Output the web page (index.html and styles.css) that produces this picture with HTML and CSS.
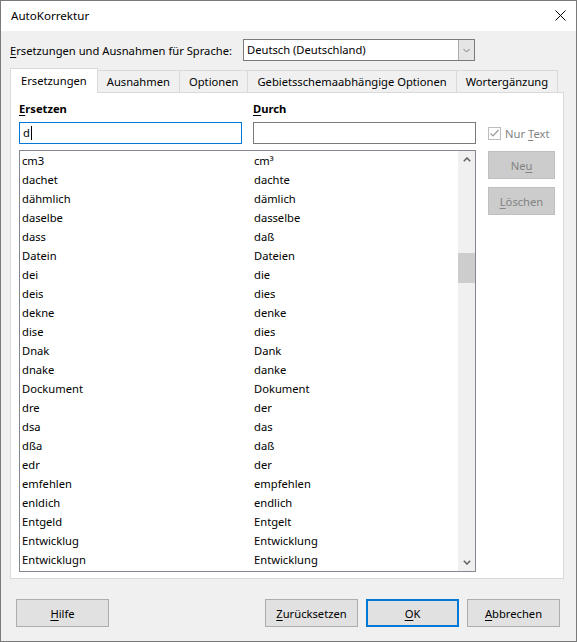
FILE: index.html
```html
<!DOCTYPE html>
<html lang="de">
<head>
    <meta charset="UTF-8">
    <title>AutoKorrektur</title>
    <link rel="stylesheet" href="styles.css">
</head>
<body>
    <div class="window">
        <!-- Titelleiste -->
        <div class="titlebar">
            <span class="title">AutoKorrektur</span>
            <svg class="close" width="11" height="11" viewBox="0 0 11 11">
                <path d="M0.5 0.5 L10.5 10.5 M10.5 0.5 L0.5 10.5" stroke="#000" stroke-width="1" fill="none"/>
            </svg>
        </div>

        <div class="content">
            <div class="lang-row">
                <span class="lang-label"><u>E</u>rsetzungen und Ausnahmen für Sprache:</span>
                <div class="combo">
                    <span class="combo-text">Deutsch (Deutschland)</span>
                    <span class="combo-btn">
                        <svg width="7" height="5" viewBox="0 0 7 5"><polyline points="0.5,1 3.5,4 6.5,1" fill="none" stroke="#7a7a7a" stroke-width="1"/></svg>
                    </span>
                </div>
            </div>

            <div class="tabs">
                <div class="tab active">Ersetzungen</div>
                <div class="tab">Ausnahmen</div>
                <div class="tab">Optionen</div>
                <div class="tab">Gebietsschemaabhängige Optionen</div>
                <div class="tab">Wortergänzung</div>
            </div>

            <div class="panel">
                <div class="left-col">
                    <div class="fields">
                        <label class="field-label"><u>E</u>rsetzen</label>
                        <label class="field-label"><u>D</u>urch</label>
                        <div class="input focused">d<span class="caret"></span></div>
                        <div class="input"></div>
                    </div>

                    <div class="listbox">
                        <div class="rows">
                            <div class="row"><span>cm3</span><span>cm³</span></div>
                            <div class="row"><span>dachet</span><span>dachte</span></div>
                            <div class="row"><span>dähmlich</span><span>dämlich</span></div>
                            <div class="row"><span>daselbe</span><span>dasselbe</span></div>
                            <div class="row"><span>dass</span><span>daß</span></div>
                            <div class="row"><span>Datein</span><span>Dateien</span></div>
                            <div class="row"><span>dei</span><span>die</span></div>
                            <div class="row"><span>deis</span><span>dies</span></div>
                            <div class="row"><span>dekne</span><span>denke</span></div>
                            <div class="row"><span>dise</span><span>dies</span></div>
                            <div class="row"><span>Dnak</span><span>Dank</span></div>
                            <div class="row"><span>dnake</span><span>danke</span></div>
                            <div class="row"><span>Dockument</span><span>Dokument</span></div>
                            <div class="row"><span>dre</span><span>der</span></div>
                            <div class="row"><span>dsa</span><span>das</span></div>
                            <div class="row"><span>dßa</span><span>daß</span></div>
                            <div class="row"><span>edr</span><span>der</span></div>
                            <div class="row"><span>emfehlen</span><span>empfehlen</span></div>
                            <div class="row"><span>enldich</span><span>endlich</span></div>
                            <div class="row"><span>Entgeld</span><span>Entgelt</span></div>
                            <div class="row"><span>Entwicklug</span><span>Entwicklung</span></div>
                            <div class="row"><span>Entwicklugn</span><span>Entwicklung</span></div>
                        </div>
                        <div class="scrollbar">
                            <div class="arrow">
                                <svg width="8" height="5" viewBox="0 0 8 5"><polyline points="0.8,4.2 4,1 7.2,4.2" fill="none" stroke="#606060" stroke-width="1.5"/></svg>
                            </div>
                            <div class="track"><div class="thumb"></div></div>
                            <div class="arrow">
                                <svg width="8" height="5" viewBox="0 0 8 5"><polyline points="0.8,0.8 4,4 7.2,0.8" fill="none" stroke="#606060" stroke-width="1.5"/></svg>
                            </div>
                        </div>
                    </div>
                </div>

                <div class="right-col">
                    <div class="check-row">
                        <span class="checkbox">
                            <svg width="11" height="11" viewBox="0 0 11 11"><polyline points="1.5,5.5 4,8 9.5,2" fill="none" stroke="#9a9a9a" stroke-width="1.2"/></svg>
                        </span>
                        <span class="disabled">Nur <u>T</u>ext</span>
                    </div>
                    <div class="button disabled-btn">Ne<u>u</u></div>
                    <div class="button disabled-btn"><u>L</u>öschen</div>
                </div>
            </div>
        </div>

        <div class="footer">
            <div class="button help"><u>H</u>ilfe</div>
            <div class="button"><u>Z</u>urücksetzen</div>
            <div class="button default"><u>O</u>K</div>
            <div class="button"><u>A</u>bbrechen</div>
        </div>
    </div>
</body>
</html>
```

FILE: styles.css
```css
body {
    margin: 0;
    font-family: "Noto Sans", "Open Sans", sans-serif;
    font-size: 11.2px;
    color: #000;
    background: #fff;
}
u {
    text-decoration-thickness: 1px;
    text-underline-offset: 2px;
}
.window {
    width: 577px;
    height: 642px;
    box-sizing: border-box;
    border: 1px solid #7a7a7a;
    background-color: #f0f0f0;
    display: flex;
    flex-direction: column;
}
/* Titelleiste */
.titlebar {
    height: 30px;
    background-color: #fff;
    display: flex;
    align-items: center;
    justify-content: space-between;
    padding: 0 10px 2px 10px;
    box-sizing: border-box;
}
.title {
    font-size: 11.6px;
}
.content {
    padding: 8px 12px 0 9px;
}
.lang-row {
    display: flex;
    align-items: center;
    height: 22px;
}
.lang-label {
    width: 233px;
}
.combo {
    width: 232px;
    height: 22px;
    box-sizing: border-box;
    border: 1px solid #7a7a7a;
    background-color: #fff;
    display: flex;
}
.combo-text {
    flex: 1;
    padding-left: 3px;
    line-height: 20px;
}
.combo-btn {
    width: 15px;
    background-color: #e5e5e5;
    border-left: 1px solid #acacac;
    display: flex;
    align-items: center;
    justify-content: center;
}
/* Reiter */
.tabs {
    display: flex;
    align-items: flex-end;
    height: 25px;
    margin-top: 7px;
    margin-bottom: -1px;
    position: relative;
    z-index: 1;
}
.tab {
    flex-shrink: 0;
    white-space: nowrap;
    height: 23px;
    box-sizing: border-box;
    padding: 0 9px;
    line-height: 21px;
    border: 1px solid #d9d9d9;
    margin-left: -1px;
    background-color: #f0f0f0;
    text-align: center;
}
.tab.active {
    height: 25px;
    margin-left: 0;
    padding: 0 10px 2px 10px;
    line-height: 24px;
    background-color: #fff;
    border-bottom: none;
}
.panel {
    height: 487px;
    box-sizing: border-box;
    background-color: #fff;
    border: 1px solid #d9d9d9;
    padding: 7px 8px 0 8px;
    display: flex;
    gap: 12px;
}
.left-col {
    width: 457px;
}
.fields {
    display: grid;
    grid-template-columns: 223px 223px;
    column-gap: 11px;
    row-gap: 5px;
}
.field-label {
    font-weight: bold;
    line-height: 17px;
}
.input {
    height: 22px;
    box-sizing: border-box;
    border: 1px solid #7a7a7a;
    background-color: #fff;
    padding-left: 3px;
    line-height: 19px;
}
.input.focused {
    border-color: #0078d7;
}
.caret {
    display: inline-block;
    width: 1px;
    height: 14px;
    background-color: #000;
    vertical-align: -3px;
    margin-left: 1px;
}
/* Liste */
.listbox {
    margin-top: 6px;
    height: 422px;
    box-sizing: border-box;
    border: 1px solid #828790;
    display: flex;
    overflow: hidden;
}
.rows {
    flex: 1;
}
.row {
    display: grid;
    grid-template-columns: 232px 1fr;
    height: 19px;
    line-height: 19px;
}
.row span {
    padding-left: 2px;
    white-space: nowrap;
}
.scrollbar {
    width: 17px;
    background-color: #f0f0f0;
    display: flex;
    flex-direction: column;
}
.arrow {
    height: 17px;
    display: flex;
    align-items: center;
    justify-content: center;
}
.track {
    flex: 1;
}
.thumb {
    margin-top: 85px;
    height: 30px;
    background-color: #cdcdcd;
}
/* rechte Spalte */
.right-col {
    width: 67px;
    padding-top: 24px;
}
.check-row {
    height: 18px;
    display: flex;
    align-items: center;
    margin-bottom: 9px;
    white-space: nowrap;
}
.checkbox {
    width: 11px;
    height: 11px;
    border: 1px solid #bcbcbc;
    background-color: #fff;
    margin-right: 4px;
    display: flex;
}
.disabled {
    color: #838383;
}
.button {
    height: 28px;
    width: 93px;
    box-sizing: border-box;
    border: 1px solid #adadad;
    background-color: #e1e1e1;
    display: flex;
    align-items: center;
    justify-content: center;
}
.disabled-btn {
    width: 67px;
    background-color: #cccccc;
    border-color: #bfbfbf;
    color: #838383;
    margin-bottom: 8px;
}
.default {
    border: 2px solid #0078d7;
}
.footer {
    display: flex;
    gap: 8px;
    padding: 20px 16px 0 15px;
}
.help {
    margin-right: auto;
}
```
